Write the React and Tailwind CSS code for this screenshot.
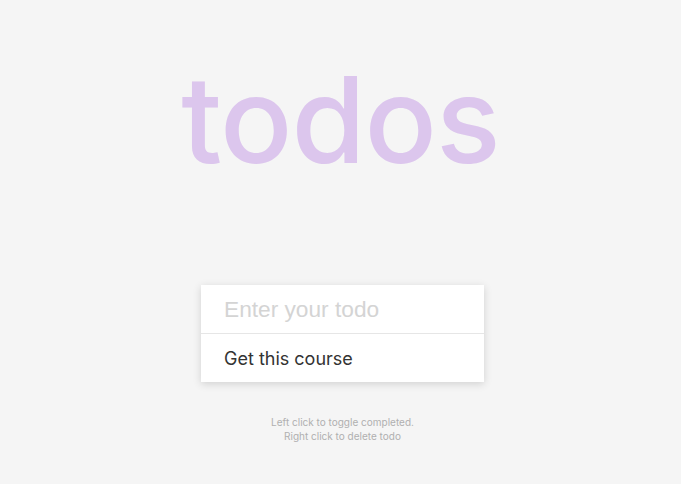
import React, { useState } from 'react';

export default function App() {
  const [todos] = useState([{ id: 1, text: 'Get this course', completed: false }]);
  const [value, setValue] = useState('');

  return (
    <div className="min-h-screen bg-[#f5f5f5] flex flex-col items-center font-['Inter',sans-serif]">
      <h1 className="mt-[60px] text-[120px] leading-none font-medium tracking-[-1px] text-[#dcc6ed] select-none">
        todos
      </h1>

      <div className="mt-[105px] ml-1 w-[283px] bg-white shadow-[0_2px_8px_rgba(0,0,0,0.15)]">
        <input
          type="text"
          value={value}
          onChange={(event) => setValue(event.target.value)}
          placeholder="Enter your todo"
          className="block w-full h-[49px] px-[23px] border-b border-[#e6e6e6] font-['Liberation_Sans',Arial,sans-serif] text-[22.7px] text-[#333] placeholder:text-[#d4d4d4] outline-none"
        />
        <ul>
          {todos.map((todo) => (
            <li key={todo.id} className="h-[48px] flex items-center px-[23px] text-[18px] text-[#333] cursor-pointer">
              {todo.text}
            </li>
          ))}
        </ul>
      </div>

      <div className="mt-[33px] ml-1 text-center text-[10px] leading-[14px] text-[#b0b0b0]">
        <p>Left click to toggle completed.</p>
        <p>Right click to delete todo</p>
      </div>
    </div>
  );
}
